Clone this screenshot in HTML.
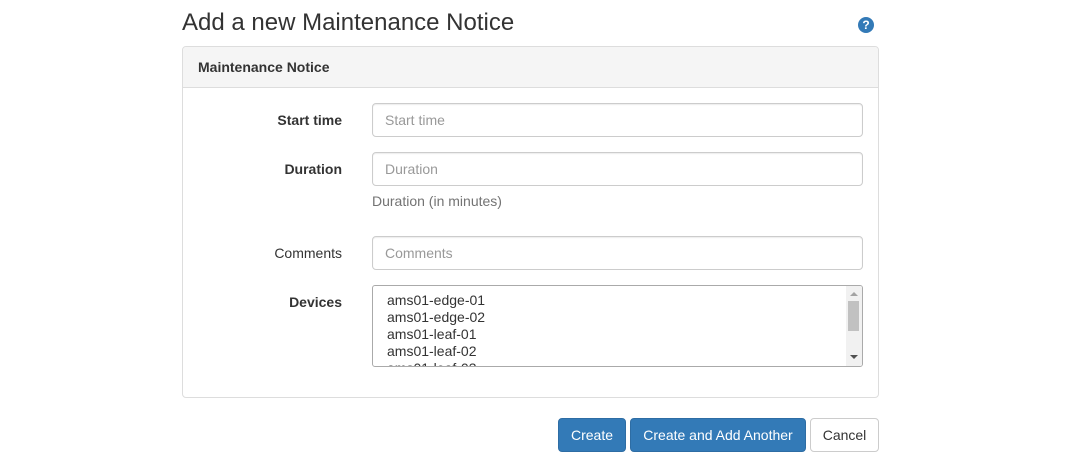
<!DOCTYPE html>
<html><head><meta charset="utf-8"><style>
*{box-sizing:border-box;margin:0;padding:0}
body{width:1091px;height:469px;background:#fff;font-family:"Liberation Sans",sans-serif;font-size:14px;color:#333;position:relative;overflow:hidden}
.a{position:absolute}
h1{position:absolute;left:182px;top:7px;font-size:24px;font-weight:normal;color:#333;line-height:32px}
.help{left:858px;top:17px;width:16px;height:16px;border-radius:50%;background:#337ab7;color:#fff;font-size:12px;font-weight:bold;text-align:center;line-height:16px}
.panel{left:182px;top:46px;width:697px;height:352px;border:1px solid #ddd;border-radius:4px}
.ph{height:41px;background:#f5f5f5;border-bottom:1px solid #ddd;padding:12px 15px;font-weight:bold;line-height:17px;border-radius:3px 3px 0 0}
.lbl{width:160px;left:182px;text-align:right;line-height:20px}
.inp{left:372px;width:491px;height:34px;border:1px solid #ccc;border-radius:4px;padding:7px 12px;color:#999;line-height:18px;box-shadow:inset 0 1px 1px rgba(0,0,0,.075)}
.btn{top:418px;height:34px;border-radius:4px;line-height:32px;text-align:center;border:1px solid #2e6da4;background:#337ab7;color:#fff}
</style></head><body>
<h1>Add a new Maintenance Notice</h1>
<div class="a help">?</div>
<div class="a panel"><div class="ph">Maintenance Notice</div></div>
<div class="a lbl" style="top:110px;font-weight:bold">Start time</div>
<div class="a inp" style="top:103px">Start time</div>
<div class="a lbl" style="top:159px;font-weight:bold">Duration</div>
<div class="a inp" style="top:152px">Duration</div>
<div class="a" style="left:372px;top:192px;color:#737373;line-height:18px">Duration (in minutes)</div>
<div class="a lbl" style="top:243px">Comments</div>
<div class="a inp" style="top:236px">Comments</div>
<div class="a lbl" style="top:292px;font-weight:bold">Devices</div>
<div class="a" style="left:372px;top:285px;width:491px;height:82px;border:1px solid #aaa;border-radius:3px;overflow:hidden">
 <div style="position:absolute;left:14px;top:6px;line-height:17px;color:#333">ams01-edge-01<br>ams01-edge-02<br>ams01-leaf-01<br>ams01-leaf-02<br>ams01-leaf-03</div>
 <div style="position:absolute;right:0;top:0;width:16px;height:80px;background:#f1f1f1">
  <div style="position:absolute;left:4px;top:6px;width:0;height:0;border-left:4px solid transparent;border-right:4px solid transparent;border-bottom:4px solid #a3a3a3"></div>
  <div style="position:absolute;left:2px;top:15px;width:11px;height:30px;background:#c1c1c1"></div>
  <div style="position:absolute;left:4px;top:69px;width:0;height:0;border-left:4px solid transparent;border-right:4px solid transparent;border-top:4px solid #505050"></div>
 </div>
</div>
<div class="a btn" style="left:558px;width:68px">Create</div>
<div class="a btn" style="left:630px;width:176px">Create and Add Another</div>
<div class="a btn" style="left:810px;width:69px;background:#fff;color:#333;border-color:#ccc">Cancel</div>
</body></html>
